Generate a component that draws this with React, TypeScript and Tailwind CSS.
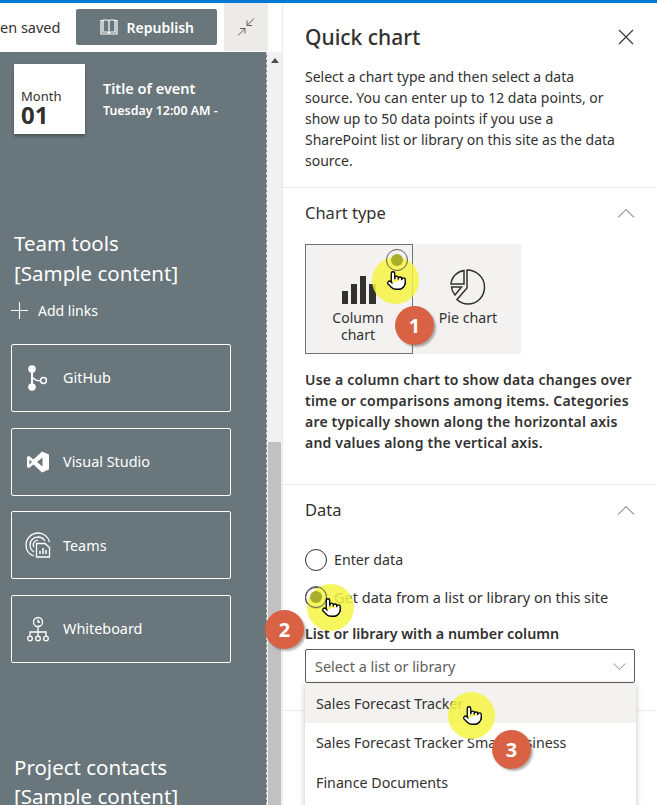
import { Pointer } from "lucide-react";

const FONT = "font-['Noto_Sans','Open_Sans',sans-serif]";

const BookIcon = () => (
  <svg width="18" height="16" viewBox="0 0 18 16" fill="none" stroke="white" strokeWidth="1.2">
    <path d="M1 1.500h2v11.500h4.500c.8 0 1.500.5 1.500 1.500 0-1 .7-1.500 1.500-1.500H15V1.500h2V15H1z" />
    <path d="M3 1h4.500C8.300 1 9 1.600 9 2.500v12M15 1h-4.500C9.700 1 9 1.600 9 2.500" />
  </svg>
);

const CollapseIcon = () => (
  <svg width="20" height="20" viewBox="0 0 20 20" fill="none" stroke="#605e5c" strokeWidth="1">
    <path d="M18 1.500 11 8.500M11 3.500v5h5" />
    <path d="M2 18.500 9 11.500M4 11.500h5v5" />
  </svg>
);

const CloseIcon = () => (
  <svg width="16" height="16" viewBox="0 0 16 16" fill="none" stroke="#323130" strokeWidth="1.100">
    <path d="M1 1l14 14M15 1 1 15" />
  </svg>
);

const ChevronIcon = ({ up, w, color }: { up?: boolean; w: number; color: string }) => (
  <svg width={w} height={w / 2 + 1} viewBox="0 0 18 10" fill="none" stroke={color} strokeWidth="1">
    <path d={up ? "M1 9.500 9 1.500l8 8" : "M1 .5l8 8 8-8"} />
  </svg>
);

const PlusIcon = () => (
  <svg width="17" height="17" viewBox="0 0 17 17" fill="none" stroke="white" strokeWidth="1.100">
    <path d="M8.500 0v17M0 8.500h17" />
  </svg>
);

const GitIcon = () => (
  <svg width="22" height="26" viewBox="0 0 22 26" fill="white">
    <circle cx="5" cy="4" r="3.800" />
    <circle cx="5" cy="22" r="3.800" />
    <path d="M4 4h2v18H4z" />
    <path d="M5 9.500c1 3.500 4 5.500 8 5.500v1.500c-3.500 0-6.500-1.500-8-4z" />
    <circle cx="16.500" cy="15.500" r="2.900" fill="none" stroke="white" strokeWidth="1.500" />
  </svg>
);

const VisualStudioIcon = () => (
  <svg width="24" height="24" viewBox="0 0 24 24" fill="white">
    <path d="M16 1.500 23 4.500V19.500L16 22.500 7.500 14.500 3 18 1 17V7L3 6 7.500 9.500zM16.500 7.500 11 12l5.500 4.500zM3.500 9.500v5L6 12z" fillRule="evenodd" />
  </svg>
);

const TeamsIcon = () => (
  <svg width="26" height="26" viewBox="0 0 26 26" fill="none" stroke="white" strokeWidth="1.300">
    <path d="M9 24C4.500 22.500 1 18.500 1 13 1 6.500 6.500 1 13 1c5.500 0 10 3.500 11.500 9" />
    <path d="M9 20c-2.500-1.500-4-4-4-7 0-4.500 3.500-8 8-8 3 0 5.500 1.500 7 4" />
    <path d="M9 15c-.5-.7-.8-1.300-.8-2 0-2.500 2-4.800 4.800-4.800" />
    <path d="M11.500 11.500h8.500l4.500 4V25h-13z" />
    <path d="M15 22v-3M18 22v-6M21 22v-4" strokeWidth="1.500" />
  </svg>
);

const WhiteboardIcon = () => (
  <svg width="24" height="26" viewBox="0 0 24 26" fill="none" stroke="white" strokeWidth="1.300">
    <circle cx="12" cy="6" r="4.500" />
    <path d="M12 3.500V6h2" />
    <path d="M12 10.500V16M4 20v-4h16v4M12 16v4" />
    <circle cx="4" cy="22.500" r="2.300" />
    <circle cx="12" cy="22.500" r="2.300" />
    <circle cx="20" cy="22.500" r="2.300" />
  </svg>
);

const ColumnChartIcon = () => (
  <svg width="34" height="34" viewBox="0 0 34 34" fill="#323130">
    <rect x="0" y="21" width="6" height="13" />
    <rect x="9" y="14" width="6" height="20" />
    <rect x="18" y="6" width="6" height="28" />
    <rect x="27" y="14" width="7" height="20" />
  </svg>
);

const PieChartIcon = () => (
  <svg width="36" height="36" viewBox="0 0 36 36" fill="none" stroke="#323130" strokeWidth="1.500">
    <path d="M14 1.500C7 2.500 1.500 8 1 15h13z" />
    <path d="M17 1c9 0 17.500 7 17.500 17S27 35 18 35c-4.500 0-8-1.500-11-4.500L17 19z" />
    <path d="M1.500 18h10l-6.500 8c-2-2.500-3.200-5-3.500-8z" />
  </svg>
);

const LinkButton = ({ label, icon }: { label: string; icon: React.ReactNode }) => (
  <div className="flex h-[68px] w-[220px] items-center rounded-[2px] border border-white text-white">
    <div className="flex w-[51px] shrink-0 justify-center pl-[1px]">{icon}</div>
    <span className="text-[14.400px]">{label}</span>
  </div>
);

const Radio = ({ label, top, size }: { label: string; top: string; size: string }) => (
  <div className={`flex items-center gap-[7px] ${top}`}>
    <div className="h-[22px] w-[22px] rounded-full border border-[#323130]" />
    <span className={`${size} text-[#323130]`}>{label}</span>
  </div>
);

// yellow highlight + hand, sits on top of the page
const Highlight = ({ pos, ringPos, dotPos }: { pos: string; ringPos?: string; dotPos?: string }) => (
  <div className={`pointer-events-none absolute h-[47px] w-[47px] rounded-full bg-[#f4f542]/85 ${pos}`}>
    {ringPos && <div className={`absolute h-[22px] w-[22px] rounded-full border border-[#605e5c] ${ringPos}`} />}
    {dotPos && <div className={`absolute h-[12px] w-[12px] rounded-full bg-[#a8ad2c] ${dotPos}`} />}
    <Pointer size={21} fill="white" stroke="black" strokeWidth={1.500} className="absolute left-[14px] top-[13px]" />
  </div>
);

const Badge = ({ n, pos }: { n: number; pos: string }) => (
  <div className={`pointer-events-none absolute flex h-[39px] w-[39px] items-center justify-center rounded-full bg-[#d96244] text-[20px] font-bold text-white shadow-[2px_2px_2px_rgba(0,0,0,0.3)] ${pos}`}>
    {n}
  </div>
);

export default function App() {
  return (
    <div className={`relative h-[805px] w-[657px] overflow-hidden bg-white ${FONT}`}>
      <div className="h-[3px] bg-[#0078d4]" />
      <div className="flex h-[802px]">
        {/* left: page being edited */}
        <div className="flex w-[283px] shrink-0 flex-col border-r border-[#edebe9]">
          <div className="flex h-[49px] items-start justify-end">
            <span className="mr-[16px] mt-[14px] whitespace-nowrap text-[14.500px] text-[#323130]">en saved</span>
            <div className="mt-[6px] flex h-[36px] w-[141px] items-center justify-center gap-[9px] rounded-[2px] bg-[#69767b] text-[14px] font-semibold text-white">
              <BookIcon />
              Republish
            </div>
            <div className="ml-[7px] flex h-[48px] w-[44px] items-center justify-center bg-[#edebe9]">
              <CollapseIcon />
            </div>
            <div className="w-[14px]" />
          </div>
          <div className="flex min-h-0 flex-1">
            <div className="w-[267px] shrink-0 overflow-hidden border-r border-dashed border-[#c8c8c8] bg-[#69767b] pl-[11px] pr-[35px]">
              <div className="ml-[3px] mt-[12px] flex">
                <div className="h-[70px] w-[71px] bg-white pl-[7px] pt-[25px] shadow-[0_2px_3px_rgba(0,0,0,0.3)]">
                  <div className="text-[13px] leading-[14px] text-[#323130]">Month</div>
                  <div className="mt-[2px] text-[24px] font-bold leading-[20px] text-[#323130]">01</div>
                </div>
                <div className="ml-[18px] mt-[14px] text-white">
                  <div className="whitespace-nowrap text-[14.500px] font-semibold leading-[20px]">Title of event</div>
                  <div className="mt-[5px] whitespace-nowrap text-[12.400px] font-semibold leading-[16px]">Tuesday 12:00 AM -</div>
                </div>
              </div>
              <div className="ml-[3px] mt-[94px] text-[20.500px] leading-[30px] text-white">
                <div>Team tools</div>
                <div className="whitespace-nowrap">[Sample content]</div>
              </div>
              <div className="mt-[12px] flex h-[20px] items-center gap-[10px] text-[14px] text-white">
                <PlusIcon />
                Add links
              </div>
              <div className="mt-[24px] flex flex-col gap-[15.700px]">
                <LinkButton label="GitHub" icon={<GitIcon />} />
                <LinkButton label="Visual Studio" icon={<VisualStudioIcon />} />
                <LinkButton label="Teams" icon={<TeamsIcon />} />
                <LinkButton label="Whiteboard" icon={<WhiteboardIcon />} />
              </div>
              <div className="ml-[3px] mt-[90px] text-[20.500px] leading-[29px] text-white">
                <div className="whitespace-nowrap">Project contacts</div>
                <div className="whitespace-nowrap">[Sample content]</div>
              </div>
            </div>
            {/* scrollbar */}
            <div className="flex w-[15px] shrink-0 flex-col items-center bg-[#f1f1f1]">
              <div className="mt-[6px] h-0 w-0 border-x-[4px] border-b-[5px] border-x-transparent border-b-[#505050]" />
              <div className="mt-[379px] w-[13px] flex-1 bg-[#c1c1c1]" />
            </div>
          </div>
        </div>

        {/* right: property pane */}
        <div className="min-w-0 flex-1 text-[#323130]">
          <div className="flex h-[185px] flex-col border-b border-[#edebe9] pl-[22px] pr-[23px]">
            <div className="mt-[18px] flex items-center justify-between">
              <span className="text-[21px] font-medium leading-[32px]">Quick chart</span>
              <CloseIcon />
            </div>
            <p className="mt-[13px] whitespace-nowrap text-[14px] leading-[21px]">
              Select a chart type and then select a data<br />
              source. You can enter up to 12 data points, or<br />
              show up to 50 data points if you use a<br />
              SharePoint list or library on this site as the data<br />
              source.
            </p>
          </div>
          <div className="h-[297px] border-b border-[#edebe9] pl-[22px] pr-[22px]">
            <div className="flex items-center justify-between pt-[13px]">
              <span className="text-[16.500px] leading-[24px]">Chart type</span>
              <ChevronIcon up w={18} color="#605e5c" />
            </div>
            <div className="mt-[19px] flex">
              <div className="flex h-[110px] w-[108px] flex-col items-center border border-[#69767b] bg-[#f3f2f1] pt-[25px]">
                <ColumnChartIcon />
                <div className="mt-[5px] pr-[2px] text-center text-[14px] leading-[17px]">Column<br />chart</div>
              </div>
              <div className="flex h-[110px] w-[108px] flex-col items-center bg-[#f3f2f1] pl-[2px] pt-[25px]">
                <PieChartIcon />
                <div className="mt-[3px] text-[14.200px] leading-[20px]">Pie chart</div>
              </div>
            </div>
            <p className="mt-[15px] whitespace-nowrap text-[14px] font-semibold leading-[21px] tracking-[0.2px]">
              Use a column chart to show data changes over<br />
              time or comparisons among items. Categories<br />
              are typically shown along the horizontal axis<br />
              and values along the vertical axis.
            </p>
          </div>
          <div className="h-[226px] border-b border-[#edebe9] pl-[22px] pr-[22px]">
            <div className="flex items-center justify-between pt-[13px]">
              <span className="text-[16.500px] leading-[24px]">Data</span>
              <ChevronIcon up w={18} color="#605e5c" />
            </div>
            <Radio label="Enter data" top="mt-[27px]" size="text-[14.200px]" />
            <Radio label="Get data from a list or library on this site" top="mt-[16px]" size="text-[14.500px]" />
            <div className="mt-[17px] whitespace-nowrap text-[14.300px] font-semibold leading-[16px]">List or library with a number column</div>
            <div className="relative mt-[7px] w-[330px]">
              <div className="flex h-[34px] items-center justify-between rounded-[2px] border border-[#605e5c] pb-[0px] pl-[9px] pr-[8px] pt-[1px] text-[14.400px] text-[#605e5c]">
                Select a list or library
                <ChevronIcon w={13} color="#605e5c" />
              </div>
              {/* open dropdown hangs over the section border */}
              <div className="absolute left-0 top-full mt-[1px] w-[331px] bg-white text-[14.250px] shadow-[0_1px_6px_rgba(0,0,0,0.25)]">
                <div className="flex h-[39px] items-center bg-[#f3f2f1] pl-[11px]">Sales Forecast Tracker</div>
                <div className="flex h-[40px] items-center pl-[11px]">Sales Forecast Tracker Small Business</div>
                <div className="flex h-[39px] items-center pl-[11px]">Finance Documents</div>
                <div className="h-[20px]" />
              </div>
            </div>
          </div>
        </div>
      </div>

      {/* walkthrough annotations */}
      <Highlight pos="left-[372px] top-[257px]" ringPos="left-[14px] top-[-8px]" dotPos="left-[19px] top-[-3px]" />
      <Badge n={1} pos="left-[395px] top-[306px]" />
      <Highlight pos="left-[307px] top-[584px]" ringPos="left-[-2px] top-[2px]" dotPos="left-[3px] top-[7px]" />
      <Badge n={2} pos="left-[265px] top-[610px]" />
      <Highlight pos="left-[448px] top-[692px]" />
      <Badge n={3} pos="left-[492px] top-[730px]" />
    </div>
  );
}
